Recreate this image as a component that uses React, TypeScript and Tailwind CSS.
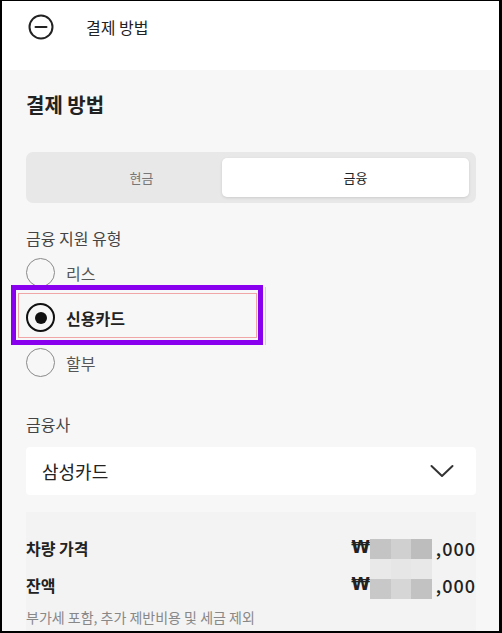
import React from "react";

const font = { fontFamily: '"Noto Sans CJK KR", "Noto Sans", sans-serif' };

function Radio({ label, checked }: { label: string; checked?: boolean }) {
  return (
    <div className="flex h-[45px] items-center">
      {checked ? (
        <div className="flex h-[29px] w-[29px] items-center justify-center rounded-full border-[2.5px] border-[#111]">
          <div className="h-[12px] w-[12px] rounded-full bg-[#111]" />
        </div>
      ) : (
        <div className="h-[29px] w-[29px] rounded-full border-[1.5px] border-[#8a8a8a]" />
      )}
      <span
        className={
          checked
            ? "ml-[11px] text-[16px] font-bold text-[#222]"
            : "ml-[11px] text-[16px] text-[#555]"
        }
      >
        {label}
      </span>
    </div>
  );
}

function Blur() {
  const cells = [
    "#c4c4c4", "#d0d0d0", "#bdbdbd",
    "#e9e9e9", "#e6e6e6", "#e8e8e8",
    "#c8c8c8", "#d6d6d6", "#c2c2c2",
  ];
  return (
    <div className="grid grid-cols-3 w-[62px]">
      {cells.map((c, i) => (
        <div key={i} className="h-[20px]" style={{ backgroundColor: c }} />
      ))}
    </div>
  );
}

function Amount() {
  return (
    <div className="flex items-center text-[18px] font-medium text-[#222]">
      <span className="font-['DejaVu_Sans',sans-serif] text-[17px] font-bold">₩</span>
      <span className="w-[62px]" />
      <span className="w-[44px] text-right tracking-[1px]">,000</span>
    </div>
  );
}

export default function App() {
  return (
    <div
      style={font}
      className="relative h-[633px] w-[502px] overflow-hidden border-t border-l-2 border-r-[3px] border-b-2 border-black bg-[#f7f7f7] text-[#222]"
    >
      {/* header */}
      <div className="flex h-[69px] items-start bg-white pl-[26px] pt-[13px]">
        <svg width="26" height="26" viewBox="0 0 26 26" fill="none">
          <circle cx="13" cy="13" r="11.5" stroke="#222" strokeWidth="2" />
          <line x1="7.5" y1="13" x2="18.5" y2="13" stroke="#222" strokeWidth="2" strokeLinecap="round" />
        </svg>
        <span className="ml-[32px] mt-[2px] text-[16px] leading-[22px] text-[#222]">결제 방법</span>
      </div>

      <div className="pl-[24px] pr-[23px]">
        <div className="flex h-[70px] items-center">
          <h1 className="text-[20px] font-semibold text-[#222]">결제 방법</h1>
        </div>

        {/* segmented */}
        <div className="relative mt-[12px] h-[51px] rounded-[7px] bg-[#e8e8e8]">
          <div className="absolute left-[196px] top-[6px] h-[39px] w-[247px] rounded-[5px] bg-white shadow-[0_1px_3px_rgba(0,0,0,0.12)]" />
          <div className="relative grid h-full grid-cols-2 pl-[6px] pr-[6px]">
            <div className="flex items-center justify-center text-[13px] text-[#777]">현금</div>
            <div className="flex items-center justify-center pr-[10px] text-[13px] text-[#222]">금융</div>
          </div>
        </div>

        <div className="mt-[25px] text-[16px] leading-[20px] text-[#444]">금융 지원 유형</div>

        <div className="relative mt-[2px]">
          <Radio label="리스" />
          <Radio label="신용카드" checked />
          <Radio label="할부" />
          {/* annotation overlay */}
          <div className="pointer-events-none absolute left-[-15px] top-[35px] h-[60px] w-[252px] border-[5px] border-[#8800ee]">
            <div className="absolute left-[2px] top-[3px] right-[1px] bottom-[2px] border border-[#f0a6a6]" />
          </div>
          <div className="pointer-events-none absolute left-[239px] top-[37px] h-[58px] w-px bg-[#f3c6c6]" />
        </div>

        <div className="mt-[29px] text-[16px] leading-[20px] text-[#444]">금융사</div>

        <div className="mt-[13px] flex h-[48px] items-center justify-between rounded-[4px] bg-white pl-[16px] pr-[22px]">
          <span className="text-[18px] text-[#222]">삼성카드</span>
          <svg width="24" height="14" viewBox="0 0 24 14" fill="none">
            <path d="M1.5 2 L12 12 L22.5 2" stroke="#333" strokeWidth="2" strokeLinecap="round" strokeLinejoin="round" />
          </svg>
        </div>

        {/* summary */}
        <div className="mt-[17px] h-[130px] bg-[#f3f3f3] pt-[25px]">
          <div className="relative">
            <div className="flex h-[22px] items-center justify-between">
              <span className="text-[16px] font-bold text-[#222]">차량 가격</span>
              <Amount />
            </div>
            <div className="mt-[15px] flex h-[22px] items-center justify-between">
              <span className="text-[16px] font-bold text-[#222]">잔액</span>
              <Amount />
            </div>
            <div className="absolute right-[44px] top-[2px]">
              <Blur />
            </div>
          </div>
          <div className="mt-[11px] text-[14px] text-[#888]">부가세 포함, 추가 제반비용 및 세금 제외</div>
        </div>
      </div>
    </div>
  );
}
